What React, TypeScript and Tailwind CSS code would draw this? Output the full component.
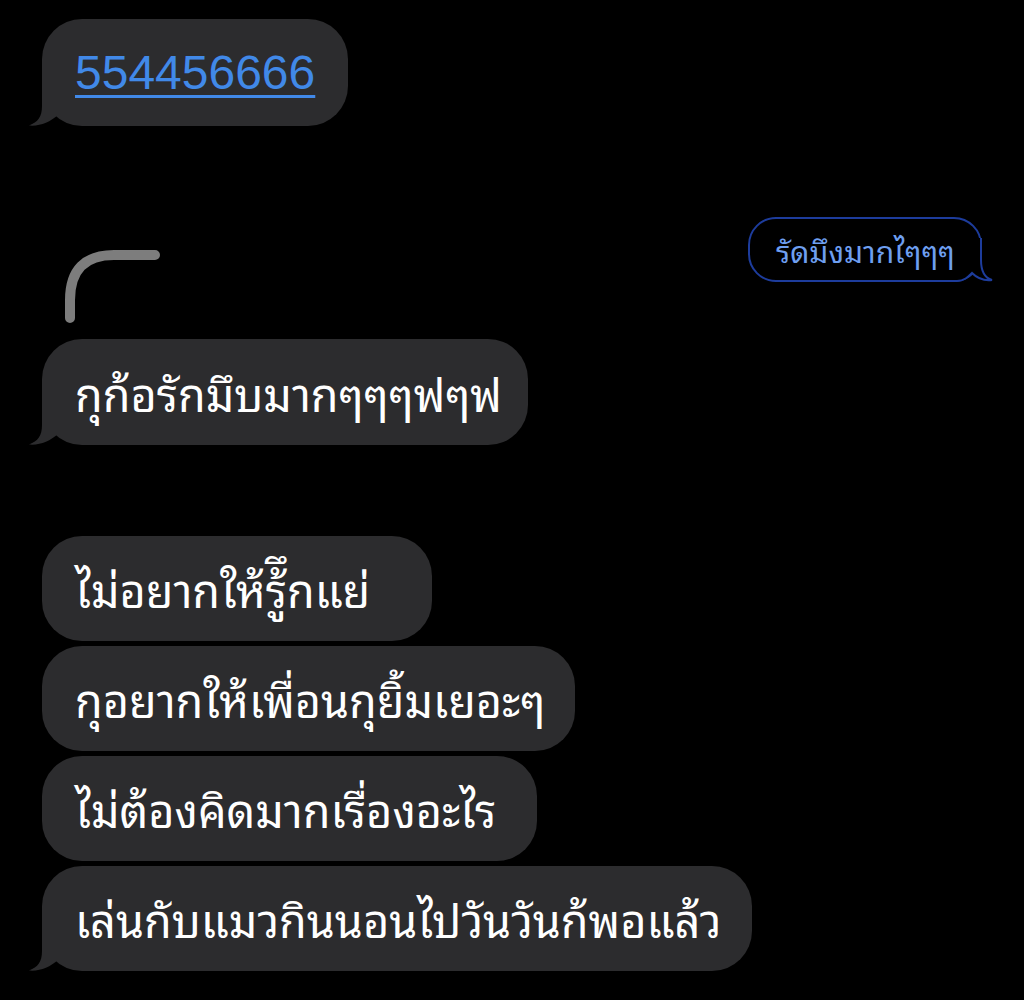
import React from "react";

const thai = { fontFamily: '"Noto Sans Thai Looped", "Noto Sans Thai", "Noto Sans", sans-serif' };

function LeftTail() {
  return (
    <svg
      className="absolute left-[-14px] bottom-0"
      width="40"
      height="45"
      viewBox="0 0 40 45"
    >
      <path d="M14 0 L14 25 C14 36 10 41 1 44.5 C12 45.5 22 41 30 34 L30 0 Z" fill="#2c2c2e" />
    </svg>
  );
}

function GrayBubble({ w, h, text, tail }: { w: string; h: string; text: string; tail?: boolean }) {
  return (
    <div className={`relative flex items-center rounded-[40px] bg-[#2c2c2e] pl-[33px] ${w} ${h}`}>
      <span className="whitespace-nowrap text-[45px] leading-none text-white" style={thai}>
        {text}
      </span>
      {tail && <LeftTail />}
    </div>
  );
}

export default function App() {
  return (
    <div className="min-h-[1000px] w-[1024px] bg-black pl-[42px] pt-[19px]">
      <div className="flex flex-col items-start">
        {/* number bubble */}
        <div className="relative flex h-[107px] w-[306px] items-center rounded-[40px] bg-[#2c2c2e] pl-[33px]">
          <span
            className="whitespace-nowrap text-[48px] leading-none text-[#4189e8] underline decoration-[3px] underline-offset-[6px]"
            style={{ fontFamily: '"Liberation Sans", Arial, sans-serif' }}
          >
            554456666
          </span>
          <LeftTail />
        </div>

        {/* arc + outlined bubble row */}
        <div className="mt-[91px] flex w-full items-start justify-between">
          <svg className="ml-[22px] mt-[33px]" width="100" height="75" viewBox="0 0 100 75">
            <path
              d="M6 68 L6 50 Q6 5 50 5 L91 5"
              fill="none"
              stroke="#7d7d7d"
              strokeWidth="10"
              strokeLinecap="round"
            />
          </svg>
          <div className="relative mr-[42px] flex h-[65px] w-[234px] items-center rounded-[28px] border-2 border-[#1d3c9c] pl-[26px]">
            <svg className="absolute right-[-14px] bottom-[-2px]" width="50" height="44" viewBox="0 0 50 44">
              <path d="M0 0 L37 0 L37 22 C37 34 41 40 48 42 C40 43 33 40 28 35 C24 39 20 43 13 43 L0 43 Z" fill="#000" />
              <path
                d="M37 0 L37 22 C37 34 41 40 48 42 C40 43 33 40 28 35 C24 39 20 43 13 43 L0 43"
                fill="none"
                stroke="#1d3c9c"
                strokeWidth="2"
              />
            </svg>
            <span className="relative z-10 whitespace-nowrap text-[30px] leading-none text-[#6e9ff0]" style={thai}>
              รัดมึงมากไๆๆๆ
            </span>
          </div>
        </div>

        <div className="mt-[14px]">
          <GrayBubble w="w-[486px]" h="h-[106px]" text="กุก้อรักมึบมากๆๆๆฟๆฟ" tail />
        </div>

        <div className="mt-[91px] flex flex-col items-start gap-[5px]">
          <GrayBubble w="w-[390px]" h="h-[105px]" text="ไม่อยากให้รู้ึกแย่" />
          <GrayBubble w="w-[533px]" h="h-[105px]" text="กุอยากให้เพื่อนกุยิ้มเยอะๆ" />
          <GrayBubble w="w-[495px]" h="h-[105px]" text="ไม่ต้องคิดมากเรื่องอะไร" />
          <GrayBubble w="w-[710px]" h="h-[105px]" text="เล่นกับแมวกินนอนไปวันวันก้พอแล้ว" tail />
        </div>
      </div>
    </div>
  );
}
